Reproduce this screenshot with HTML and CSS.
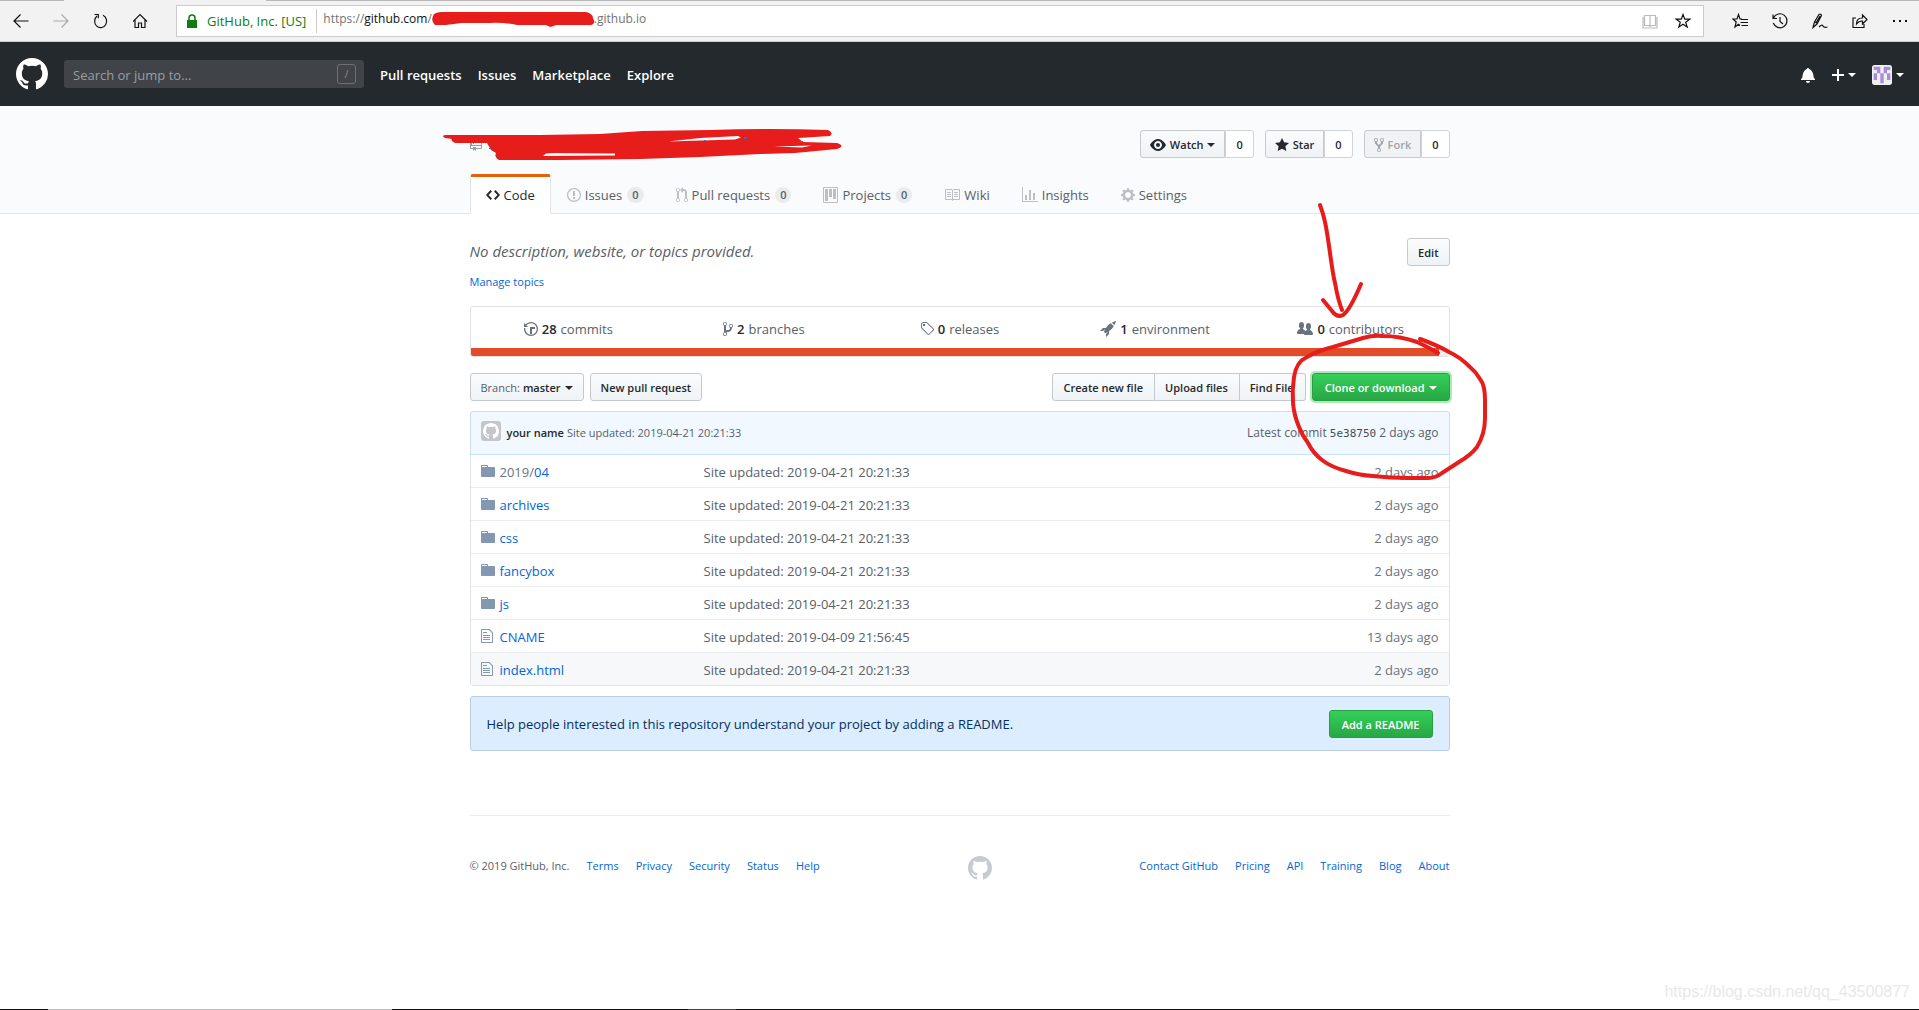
FILE: index.html
```html
<!DOCTYPE html>
<html lang="en">
<head>
<meta charset="utf-8">
<title>GitHub repository</title>
<link rel="stylesheet" href="styles.css">
</head>
<body>
<svg class="sprite" aria-hidden="true">
  <symbol id="mark" viewBox="0 0 16 16"><path fill-rule="evenodd" d="M8 0C3.58 0 0 3.58 0 8c0 3.54 2.29 6.53 5.47 7.59.4.07.55-.17.55-.38 0-.19-.01-.82-.01-1.49-2.01.37-2.53-.49-2.69-.94-.09-.23-.48-.94-.82-1.13-.28-.15-.68-.52-.01-.53.63-.01 1.08.58 1.23.82.72 1.21 1.87.87 2.33.66.07-.52.28-.87.51-1.07-1.78-.2-3.64-.89-3.64-3.95 0-.87.31-1.59.82-2.15-.08-.2-.36-1.02.08-2.12 0 0 .67-.21 2.2.82.64-.18 1.32-.27 2-.27.68 0 1.36.09 2 .27 1.53-1.04 2.2-.82 2.2-.82.44 1.1.16 1.92.08 2.12.51.56.82 1.27.82 2.15 0 3.07-1.87 3.75-3.65 3.95.29.25.54.73.54 1.48 0 1.07-.01 1.93-.01 2.2 0 .21.15.46.55.38A8.013 8.013 0 0 0 16 8c0-4.42-3.58-8-8-8z"/></symbol>
  <symbol id="folder" viewBox="0 0 14 16"><path fill-rule="evenodd" d="M13 4H7V3c0-.66-.31-1-1-1H1c-.55 0-1 .45-1 1v10c0 .55.45 1 1 1h12c.55 0 1-.45 1-1V5c0-.55-.45-1-1-1zM6 4H1V3h5v1z"/></symbol>
  <symbol id="file" viewBox="0 0 12 16"><path fill-rule="evenodd" d="M6 5H2V4h4v1zM2 8h7V7H2v1zm0 2h7V9H2v1zm0 2h7v-1H2v1zm10-7.5V14c0 .55-.45 1-1 1H1c-.55 0-1-.45-1-1V2c0-.55.45-1 1-1h7.5L12 4.5zM11 5L8 2H1v12h10V5z"/></symbol>
</svg>

<div class="tabstrip"><span></span></div>
<div class="browser">
  <div class="browser-nav">
    <button type="button" aria-label="Back"><svg width="16" height="16" viewBox="0 0 16 16"><path d="M15.500 8H1M7.500 1.500L1 8l6.500 6.500"/></svg></button>
    <button type="button" aria-label="Forward" disabled><svg width="16" height="16" viewBox="0 0 16 16"><path d="M.5 8H15M8.500 1.500L15 8l-6.500 6.500"/></svg></button>
    <button type="button" aria-label="Refresh"><svg width="16" height="16" viewBox="0 0 16 16"><path d="M10 2.200A6 6.500 0 1 1 4 3M1.500 1.500h3.800v3.800"/></svg></button>
    <button type="button" aria-label="Home"><svg width="16" height="16" viewBox="0 0 16 16"><path d="M0 8.500L7 1.500l7 7M2 7v7.500h3.500V10h3v4.500H12V7"/></svg></button>
  </div>
  <div class="address">
    <svg class="lock" width="10" height="14" viewBox="0 0 10 14"><path d="M0 6h10v8H0z"/><path d="M2 6V4a3 3 0 0 1 6 0v2" fill="none" stroke="#107c10" stroke-width="1.500"/></svg>
    <span class="owner">GitHub, Inc. [US]</span>
    <span class="url">https://<b>github.com</b>/<svg class="redact" width="162" height="14" viewBox="0 0 164 14"><path d="M2 2Q5 0 10 0H156Q163 2 163 6Q166 12 161 13H126L120 15 115 13H86Q70 10 58 11L30 11 14 13H3Q-2 9 2 2z"/></svg>.github.io</span>
    <button type="button" class="pale" aria-label="Reading view"><svg width="16" height="16" viewBox="0 0 16 16"><path d="M8 2.500H2.500v10H7l1 1 1-1h4.500v-10zM8 2.500v11M1 4v11h14V4"/></svg></button>
    <button type="button" aria-label="Add to favorites"><svg width="16" height="16" viewBox="0 0 16 16"><path d="M8 1.500l1.700 4.700h5l-4 3 1.500 4.900L8 11.200l-4.200 2.900 1.500-4.900-4-3h5z"/></svg></button>
  </div>
  <div class="browser-tools">
    <button type="button" aria-label="Favorites"><svg width="16" height="16" viewBox="0 0 16 16"><path d="M10 6L8 6 6.500 1.500 5 6H1l3.200 3L3 14l3.500-2.800L8 12.500M9 6.500h7M8.500 9.500H16M9.500 12.500H16"/></svg></button>
    <button type="button" aria-label="History"><svg width="16" height="16" viewBox="0 0 16 16"><path d="M1.500 5A7 7 0 1 1 1.300 10M1 1.500V5.500H5M8 4v4.500l3 2.500"/></svg></button>
    <button type="button" aria-label="Notes"><svg width="16" height="16" viewBox="0 0 16 16"><path d="M1 14.500L2.500 9 7 1.500q2-1 2.500 1L5 11zM3 9l2.500 1.500M7 14q3-3 4-1t4.500 1M8 3L4 10"/></svg></button>
    <button type="button" aria-label="Share"><svg width="16" height="16" viewBox="0 0 16 16"><path d="M4 5H1v9.500h11V11M4.500 11q0-6 6-6V2L15 6.500l-4.500 4.500V8q-4 0-6 3z"/></svg></button>
    <button type="button" aria-label="More"><svg width="16" height="16" viewBox="0 0 16 16"><path d="M1 8h2M7 8h2M13 8h2" stroke-width="2"/></svg></button>
  </div>
</div>

<header class="header">
  <a href="#" aria-label="Homepage" class="logo"><svg width="32" height="32"><use href="#mark"/></svg></a>
  <label class="search"><input type="text" placeholder="Search or jump to..." aria-label="Search or jump to"><kbd>/</kbd></label>
  <nav class="main-nav"><a href="#">Pull requests</a><a href="#">Issues</a><a href="#">Marketplace</a><a href="#">Explore</a></nav>
  <div class="user-nav">
    <a href="#" aria-label="Notifications"><svg width="15" height="16" viewBox="0 0 15 16"><path fill-rule="evenodd" d="M14 12v1H0v-1l.73-.58c.77-.77.81-2.55 1.19-4.42C2.690 3.230 6 2 6 2c0-.55.45-1 1-1s1 .45 1 1c0 0 3.390 1.230 4.160 5 .38 1.880.42 3.660 1.190 4.420l.66.58H14zm-7 4c1.110 0 2-.89 2-2H5c0 1.110.89 2 2 2z"/></svg></a>
    <button type="button" aria-label="Create new"><svg width="12" height="16" viewBox="0 0 12 16"><path d="M12 9H7v5H5V9H0V7h5V2h2v5h5v2z"/></svg><i class="caret"></i></button>
    <button type="button" aria-label="Account"><svg class="avatar" width="20" height="20" viewBox="0 0 60 60"><rect width="60" height="60" rx="8" fill="#f0f0f0"/><path fill="#a98bdc" d="M5 5h20v20H15V15H5zM35 5h20v10H45v10H35zM5 25h10v20H5zM45 25h10v20H45zM25 25h10v30H25z"/></svg><i class="caret"></i></button>
  </div>
</header>

<div class="pagehead">
  <div class="container">
    <div class="titlebar">
      <svg class="repo-icon" width="12" height="16" viewBox="0 0 12 16"><path fill-rule="evenodd" d="M4 9H3V8h1v1zm0-3H3v1h1V6zm0-2H3v1h1V4zm0-2H3v1h1V2zm8-1v12c0 .55-.45 1-1 1H6v2l-1.500-1.500L3 16v-2H1c-.55 0-1-.45-1-1V1c0-.55.45-1 1-1h10c.55 0 1 .45 1 1zm-1 10H1v2h2v-1h3v1h5v-2zm0-10H2v9h9V1z"/></svg>
      <div class="social">
        <div class="group"><button type="button" class="btn"><svg width="16" height="16" viewBox="0 0 16 16"><path fill-rule="evenodd" d="M8.060 2C3 2 0 8 0 8s3 6 8.060 6C13 14 16 8 16 8s-3-6-7.940-6zM8 12c-2.200 0-4-1.780-4-4 0-2.200 1.800-4 4-4 2.220 0 4 1.800 4 4 0 2.220-1.780 4-4 4zm2-4c0 1.110-.89 2-2 2-1.110 0-2-.89-2-2 0-1.110.89-2 2-2 1.110 0 2 .89 2 2z"/></svg>Watch<i class="caret"></i></button><a href="#" class="count">0</a></div>
        <div class="group"><button type="button" class="btn"><svg width="14" height="16" viewBox="0 0 14 16"><path d="M14 6l-4.900-.64L7 1 4.900 5.360 0 6l3.600 3.260L2.670 14 7 11.670 11.330 14l-.93-4.740L14 6z"/></svg>Star</button><a href="#" class="count">0</a></div>
        <div class="group"><button type="button" class="btn" disabled><svg width="10" height="16" viewBox="0 0 10 16"><path fill-rule="evenodd" d="M8 1a1.993 1.993 0 0 0-1 3.720V6L5 8 3 6V4.720A1.993 1.993 0 0 0 2 1a1.993 1.993 0 0 0-1 3.720V6.500l3 3v1.780A1.993 1.993 0 0 0 5 15a1.993 1.993 0 0 0 1-3.720V9.500l3-3V4.720A1.993 1.993 0 0 0 8 1zM2 4.200C1.340 4.200.8 3.650.8 3c0-.65.55-1.200 1.200-1.200.65 0 1.200.55 1.200 1.200 0 .65-.55 1.200-1.200 1.200zm3 10c-.66 0-1.200-.55-1.200-1.200 0-.65.55-1.200 1.200-1.200.65 0 1.200.55 1.200 1.200 0 .65-.55 1.200-1.200 1.200zm3-10c-.66 0-1.200-.55-1.200-1.200 0-.65.55-1.200 1.200-1.200.65 0 1.200.55 1.200 1.200 0 .65-.55 1.200-1.200 1.200z"/></svg>Fork</button><a href="#" class="count">0</a></div>
      </div>
    </div>
    <nav class="tabs">
      <a href="#" class="selected"><svg width="14" height="16" viewBox="0 0 14 16"><path d="M9.500 3L8 4.500 11.500 8 8 11.500 9.500 13 14 8 9.500 3zm-5 0L0 8l4.500 5L6 11.500 2.500 8 6 4.500 4.500 3z"/></svg>Code</a>
      <a href="#"><svg width="14" height="16" viewBox="0 0 14 16"><path fill-rule="evenodd" d="M7 2.300c3.140 0 5.700 2.560 5.700 5.700s-2.560 5.700-5.700 5.700A5.710 5.710 0 0 1 1.300 8c0-3.140 2.560-5.700 5.700-5.700zM7 1C3.140 1 0 4.140 0 8s3.140 7 7 7 7-3.140 7-7-3.140-7-7-7zm1 3H6v5h2V4zm0 6H6v2h2v-2z"/></svg>Issues<span class="counter">0</span></a>
      <a href="#"><svg width="12" height="16" viewBox="0 0 12 16"><path fill-rule="evenodd" d="M11 11.280V5c-.03-.78-.34-1.470-.94-2.060C9.460 2.350 8.780 2.030 8 2H7V0L4 3l3 3V4h1c.27.02.48.11.69.31.21.2.3.42.31.69v6.280A1.993 1.993 0 0 0 10 15a1.993 1.993 0 0 0 1-3.720zm-1 2.920c-.66 0-1.200-.55-1.200-1.200 0-.65.55-1.200 1.200-1.200.65 0 1.200.55 1.200 1.200 0 .65-.55 1.200-1.200 1.200zM4 3c0-1.110-.89-2-2-2a1.993 1.993 0 0 0-1 3.720v6.560A1.993 1.993 0 0 0 2 15a1.993 1.993 0 0 0 1-3.720V4.720c.59-.34 1-.98 1-1.720zm-.8 10c0 .66-.55 1.200-1.200 1.200-.65 0-1.200-.55-1.200-1.200 0-.65.55-1.200 1.200-1.200.65 0 1.200.55 1.200 1.200zM2 4.200C1.340 4.200.8 3.650.8 3c0-.65.55-1.200 1.200-1.200.65 0 1.200.55 1.200 1.200 0 .65-.55 1.200-1.200 1.200z"/></svg>Pull requests<span class="counter">0</span></a>
      <a href="#"><svg width="15" height="16" viewBox="0 0 15 16"><path fill-rule="evenodd" d="M10 12h3V2h-3v10zm-4-2h3V2H6v8zm-4 4h3V2H2v12zm-1 1h13V1H1v14zM14 0H1a1 1 0 0 0-1 1v14a1 1 0 0 0 1 1h13a1 1 0 0 0 1-1V1a1 1 0 0 0-1-1z"/></svg>Projects<span class="counter">0</span></a>
      <a href="#"><svg width="16" height="16" viewBox="0 0 16 16"><path fill-rule="evenodd" d="M3 5h4v1H3V5zm0 3h4V7H3v1zm0 2h4V9H3v1zm11-5h-4v1h4V5zm0 2h-4v1h4V7zm0 2h-4v1h4V9zm2-6v9c0 .55-.45 1-1 1H9.500l-1 1-1-1H2c-.55 0-1-.45-1-1V3c0-.55.45-1 1-1h5.500l1 1 1-1H15c.55 0 1 .45 1 1zm-8 .5L7.500 3H2v9h6V3.500zm7-.5H9.500l-.5.5V12h6V3z"/></svg>Wiki</a>
      <a href="#"><svg width="16" height="16" viewBox="0 0 16 16"><path d="M16 14v1H0V0h1v14h15zM5 13H3V8h2v5zm4 0H7V3h2v10zm4 0h-2V6h2v7z"/></svg>Insights</a>
      <a href="#"><svg width="14" height="16" viewBox="0 0 14 16"><path fill-rule="evenodd" d="M14 8.770v-1.600l-1.940-.64-.45-1.090.88-1.840-1.130-1.130-1.810.91-1.090-.45-.69-1.920h-1.600l-.63 1.940-1.110.45-1.840-.88-1.130 1.130.91 1.810-.45 1.090L0 7.230v1.590l1.940.64.45 1.090-.88 1.840 1.130 1.130 1.810-.91 1.090.45.69 1.920h1.590l.63-1.940 1.110-.45 1.840.88 1.130-1.130-.92-1.810.47-1.090L14 8.750v.02zM7 11c-1.660 0-3-1.340-3-3s1.340-3 3-3 3 1.340 3 3-1.340 3-3 3z"/></svg>Settings</a>
    </nav>
  </div>
</div>

<main class="container">
  <div class="about">
    <div><p class="desc">No description, website, or topics provided.</p><a href="#" class="topics">Manage topics</a></div>
    <button type="button" class="btn">Edit</button>
  </div>

  <div class="summary">
    <ul>
      <li><a href="#"><svg width="14" height="16" viewBox="0 0 14 16"><path d="M8 13H6V6h5v2H8v5zM7 1C4.810 1 2.870 2.020 1.590 3.590L0 2v4h4L2.500 4.500C3.550 3.170 5.170 2.300 7 2.300c3.140 0 5.700 2.560 5.700 5.700s-2.560 5.700-5.700 5.700A5.710 5.710 0 0 1 1.300 8c0-.34.03-.67.09-1H.08C.03 7.330 0 7.660 0 8c0 3.860 3.140 7 7 7s7-3.140 7-7-3.140-7-7-7z"/></svg><b>28</b> commits</a></li>
      <li><a href="#"><svg width="10" height="16" viewBox="0 0 10 16"><path fill-rule="evenodd" d="M10 5c0-1.110-.89-2-2-2a1.993 1.993 0 0 0-1 3.720v.3c-.02.52-.23.98-.63 1.380-.4.4-.86.61-1.380.63-.83.02-1.480.16-2 .45V4.720a1.993 1.993 0 0 0-1-3.720C.88 1 0 1.890 0 3a2 2 0 0 0 1 1.720v6.560c-.59.35-1 .99-1 1.720 0 1.110.89 2 2 2 1.110 0 2-.89 2-2 0-.53-.2-1-.53-1.360.09-.06.48-.41.59-.47.25-.11.56-.17.94-.17 1.050-.05 1.950-.45 2.750-1.250S8.950 7.770 9 6.730h-.02C9.590 6.370 10 5.730 10 5zM2 1.800c.66 0 1.200.55 1.200 1.200 0 .65-.55 1.200-1.200 1.200C1.350 4.200.8 3.650.8 3c0-.65.55-1.200 1.200-1.200zm0 12.410c-.66 0-1.200-.55-1.200-1.200 0-.65.55-1.200 1.200-1.200.65 0 1.200.55 1.200 1.200 0 .65-.55 1.200-1.200 1.200zm6-8c-.66 0-1.200-.55-1.200-1.200 0-.65.55-1.200 1.200-1.200.65 0 1.200.55 1.200 1.200 0 .65-.55 1.200-1.200 1.200z"/></svg><b>2</b> branches</a></li>
      <li><a href="#"><svg width="14" height="16" viewBox="0 0 14 16"><path fill-rule="evenodd" d="M7.730 1.730C7.260 1.260 6.620 1 5.960 1H3.500C2.130 1 1 2.130 1 3.500v2.470c0 .66.27 1.300.73 1.770l6.060 6.060c.39.39 1.020.39 1.410 0l4.590-4.590a.996.996 0 0 0 0-1.410L7.730 1.730zM2.380 7.090c-.31-.3-.47-.7-.47-1.130V3.500c0-.88.72-1.590 1.590-1.590h2.470c.42 0 .83.16 1.130.47l6.140 6.130-4.730 4.730-6.130-6.150zM3.010 3h2v2H3V3h.01z"/></svg><b>0</b> releases</a></li>
      <li><a href="#"><svg width="16" height="16" viewBox="0 0 16 16"><path d="M12.170 3.830c-.27-.27-.47-.55-.63-.88-.16-.31-.27-.66-.34-1.020-.58.33-1.160.7-1.730 1.130-.58.44-1.140.94-1.690 1.480-.7.7-1.330 1.810-1.780 2.450H3L0 10h3l2-2c-.34.77-1.020 2.980-1 3l1 1c.02.02 2.230-.64 3-1l-2 2v3l3-3v-3c.64-.45 1.750-1.090 2.450-1.780.55-.55 1.050-1.130 1.470-1.700.44-.58.81-1.160 1.140-1.720-.36-.08-.7-.19-1.030-.34a3.390 3.390 0 0 1-.86-.63zM16 0s-.09.38-.3 1.060c-.2.7-.55 1.580-1.060 2.660-.7-.08-1.270-.33-1.660-.72-.39-.39-.63-.94-.7-1.640C13.360.84 14.230.48 14.920.28 15.620.08 16 0 16 0z"/></svg><b>1</b> environment</a></li>
      <li><a href="#"><svg width="16" height="16" viewBox="0 0 16 16"><path d="M16 12.999c0 .439-.45 1-1 1H7.995c-.539 0-.994-.447-.995-.999H1c-.54 0-1-.561-1-1 0-2.634 3-4 3-4s.229-.409 0-1c-.841-.621-1.058-.59-1-3 .058-2.419 1.367-3 2.500-3s2.442.58 2.500 3c.058 2.410-.159 2.379-1 3-.229.59 0 1 0 1s1.549.711 2.420 2.088C9.196 9.369 10 8.999 10 8.999s.229-.409 0-1c-.841-.62-1.058-.59-1-3 .058-2.419 1.367-3 2.500-3s2.437.581 2.495 3c.059 2.410-.158 2.380-1 3-.229.59 0 1 0 1s3.005 1.366 3.005 4z"/></svg><b>0</b> contributors</a></li>
    </ul>
    <div class="langbar"><span style="width:99%"></span></div>
  </div>

  <div class="filenav">
    <button type="button" class="btn"><span class="light">Branch:</span> master<i class="caret"></i></button>
    <button type="button" class="btn">New pull request</button>
    <div class="group push"><button type="button" class="btn">Create new file</button><button type="button" class="btn">Upload files</button><button type="button" class="btn">Find File</button></div>
    <button type="button" class="btn green focused">Clone or download<i class="caret"></i></button>
  </div>

  <div class="files">
    <div class="commit">
      <span class="face"><svg width="16" height="16"><use href="#mark"/></svg></span>
      <a href="#" class="author">your name</a><a href="#" class="message">Site updated: 2019-04-21 20:21:33</a>
      <span class="latest">Latest commit <a href="#">5e38750</a> 2 days ago</span>
    </div>
    <table>
      <tr><td class="icon"><svg width="14" height="16"><use href="#folder"/></svg></td><td class="name"><a href="#"><span>2019/</span>04</a></td><td class="msg">Site updated: 2019-04-21 20:21:33</td><td class="age">2 days ago</td></tr>
      <tr><td class="icon"><svg width="14" height="16"><use href="#folder"/></svg></td><td class="name"><a href="#">archives</a></td><td class="msg">Site updated: 2019-04-21 20:21:33</td><td class="age">2 days ago</td></tr>
      <tr><td class="icon"><svg width="14" height="16"><use href="#folder"/></svg></td><td class="name"><a href="#">css</a></td><td class="msg">Site updated: 2019-04-21 20:21:33</td><td class="age">2 days ago</td></tr>
      <tr><td class="icon"><svg width="14" height="16"><use href="#folder"/></svg></td><td class="name"><a href="#">fancybox</a></td><td class="msg">Site updated: 2019-04-21 20:21:33</td><td class="age">2 days ago</td></tr>
      <tr><td class="icon"><svg width="14" height="16"><use href="#folder"/></svg></td><td class="name"><a href="#">js</a></td><td class="msg">Site updated: 2019-04-21 20:21:33</td><td class="age">2 days ago</td></tr>
      <tr><td class="icon"><svg width="12" height="16"><use href="#file"/></svg></td><td class="name"><a href="#">CNAME</a></td><td class="msg">Site updated: 2019-04-09 21:56:45</td><td class="age">13 days ago</td></tr>
      <tr class="hover"><td class="icon"><svg width="12" height="16"><use href="#file"/></svg></td><td class="name"><a href="#">index.html</a></td><td class="msg">Site updated: 2019-04-21 20:21:33</td><td class="age">2 days ago</td></tr>
    </table>
  </div>

  <div class="readme"><p>Help people interested in this repository understand your project by adding a README.</p><button type="button" class="btn green">Add a README</button></div>
</main>

<footer class="container footer">
  <nav><span>© 2019 GitHub, Inc.</span><a href="#">Terms</a><a href="#">Privacy</a><a href="#">Security</a><a href="#">Status</a><a href="#">Help</a></nav>
  <a href="#" class="footmark" aria-label="GitHub"><svg width="24" height="24"><use href="#mark"/></svg></a>
  <nav><a href="#">Contact GitHub</a><a href="#">Pricing</a><a href="#">API</a><a href="#">Training</a><a href="#">Blog</a><a href="#">About</a></nav>
</footer>
<div class="taskbar"></div>
<div class="watermark">https://blog.csdn.net/qq_43500877</div>

<svg class="ink" viewBox="470 0 980 500" aria-hidden="true">
  <path class="fill" d="M445 135L540 135 600 134 642 131 710 130Q770 128 828 130Q834 133 830 136L798 138 803 142 837 143Q846 146 837 149L795 153 760 154 700 157 640 159 560 160 499 160Q494 157 496 153L491 150 487 143 455 143Q450 140 452 139L445 138Q441 136 445 135z"/>
  <path class="gap" d="M668 141.500L700 138 738 136 741 137.500 735 139.500zM553 153L615 153.500 615 155.500 543 156 546 153.500zM774 146.500l38-1-10 2z"/>
  <path class="blue" d="M704 140h2v1h-2zM744 137h3v2h-3zM799 141h4v1h-4zM489 148h2v1h-2z"/>
  <path class="line" d="M1320 205Q1323 213 1325 222T1330 253T1335 283Q1338 300 1342 310M1323 300L1332 311Q1337 318 1343 315Q1350 310 1361 284"/>
  <path class="line" d="M1438 353Q1428 347 1417 342Q1400 336 1383 336Q1373 335 1363 338L1333 347Q1317 351 1307 357Q1296 362 1294 377Q1292 390 1293 403Q1294 415 1299 427Q1302 435 1308 443Q1313 453 1322 460Q1331 467 1346 471Q1358 475 1373 476Q1390 478 1408 478L1428 478Q1436 478 1442 473L1459 462Q1471 455 1477 447Q1485 434 1485 418V400Q1485 385 1480 379Q1476 372 1470 367Q1460 357 1449 352Q1437 345 1420 339"/>
</svg>
</body>
</html>
```
FILE: styles.css
```css
* { box-sizing: border-box; }
body {
  margin: 0;
  min-height: 100vh;
  position: relative;
  display: flex;
  flex-direction: column;
  overflow-x: hidden;
  background: #fff;
  color: #24292e;
  font: 13px/20px "Open Sans", "Noto Sans", sans-serif;
}
a { color: #0366d6; text-decoration: none; }
p, ul { margin: 0; padding: 0; }
svg { display: block; flex: none; fill: currentColor; }
button { font: inherit; color: inherit; background: none; border: 0; padding: 0; cursor: pointer; }
b { font-weight: 600; }
.sprite { position: absolute; width: 0; height: 0; }
.container { width: 100%; max-width: 980px; margin: 0 auto; }

/* Browser chrome */
.tabstrip { height: 1px; padding-left: 64px; background: #b8b8b8; }
.tabstrip span { display: block; width: 202px; height: 1px; background: #f2f2f2; }
.browser {
  height: 41px;
  display: flex;
  align-items: center;
  background: #f2f2f2;
  border-bottom: 1px solid #ccc;
  color: #111;
}
.browser-nav { display: flex; gap: 24px; padding: 0 27px 0 13px; }
.browser-tools { display: flex; gap: 24px; padding: 0 11px 0 28px; }
.browser button svg { fill: none; stroke: currentColor; stroke-width: 1.2; }
.browser button:disabled { color: #aaa; }
.address {
  flex: 1;
  height: 32px;
  display: flex;
  align-items: center;
  padding: 0 12px 0 10px;
  background: #fff;
  border: 1px solid #ccc;
}
.lock { color: #107c10; margin-right: 10px; }
.owner { color: #107c10; padding-right: 10px; margin-right: 6px; border-right: 1px solid #ccc; line-height: 24px; white-space: nowrap; }
.url { flex: 1; display: flex; color: #737373; font-size: 12px; height: 24px; line-height: 20px; white-space: nowrap; }
.url b { color: #111; font-weight: 400; }
.redact { color: #e71d1c; margin-top: 3px; overflow: visible; }
.pale { color: #bbb; margin-right: 17px; }

/* Site header */
.header {
  height: 64px;
  display: flex;
  align-items: center;
  padding: 0 15px 0 16px;
  background: #24292e;
  color: #fff;
}
.header a { color: #fff; }
.logo { margin-right: 16px; }
.search { display: flex; align-items: center; width: 300px; height: 28px; padding: 0 8px 0 9px; background: #404448; border-radius: 3px; }
.search input { flex: 1; min-width: 0; padding: 2px 0 0; border: 0; background: none; color: #fff; font: inherit; outline: 0; }
.search input::placeholder { color: #9a9da0; opacity: 1; }
.search kbd { width: 19px; height: 20px; border: 1px solid #6c7074; border-radius: 3px; color: #85888b; font: 11px/18px "Open Sans", sans-serif; text-align: center; }
.main-nav { display: flex; gap: 16px; margin-left: 16px; padding-top: 2px; font-weight: 600; }
.user-nav { display: flex; align-items: center; gap: 16px; margin-left: auto; padding-top: 2px; }
.user-nav button { display: flex; align-items: center; }
.caret { display: inline-block; width: 0; height: 0; margin-left: 4px; vertical-align: middle; border: 4px solid transparent; border-top-color: currentColor; border-bottom: 0; }

/* Repository head */
.pagehead { padding-top: 24px; background: #fafbfc; border-bottom: 1px solid #e1e4e8; }
.titlebar { display: flex; justify-content: space-between; margin-bottom: 16px; }
.repo-icon { color: #959da5; margin-top: 5px; }
.social { display: flex; gap: 11px; }
.group { display: flex; }
.btn {
  display: inline-flex;
  align-items: center;
  justify-content: center;
  height: 28px;
  padding: 2px 10px 0;
  border: 1px solid #c6cacd;
  border-radius: 3px;
  background: linear-gradient(#fafbfc, #eff3f6);
  font-size: 11px;
  font-weight: 600;
  line-height: 20px;
  white-space: nowrap;
}
.btn svg { margin-right: 4px; }
.btn:disabled { color: #a0a4a8; background: #eff3f6; }
.btn .light { color: #586069; font-weight: 400; margin-right: 3px; }
.group > :not(:last-child) { border-radius: 3px 0 0 3px; }
.group > * + * { border-left: 0; border-radius: 0 3px 3px 0; }
.group > * + :not(:last-child) { border-radius: 0; }
.push .btn { padding-right: 11px; }
.count { height: 28px; padding: 1px 10px 0; border: 1px solid #d1d4d7; background: #fff; color: #24292e; font-size: 11px; font-weight: 600; line-height: 26px; }
.social .btn { padding-right: 9px; padding-left: 9px; }
.green { padding-right: 12px; padding-left: 12px; color: #fff; border-color: #279f42; background: linear-gradient(#34d058, #28a745); }
.focused { box-shadow: 0 0 0 2px #aee9bc; }

.tabs { display: flex; margin-bottom: -1px; }
.tabs a { display: flex; align-items: center; height: 40px; padding: 0 15px; border: 1px solid transparent; border-top: 3px solid transparent; color: #586069; }
.tabs svg { margin-right: 4px; color: #bcc0c4; }
.tabs .selected { background: #fff; border-color: #e36209 #e1e4e8 transparent; border-radius: 3px 3px 0 0; color: #24292e; }
.tabs .selected svg { color: inherit; }
.counter { margin-left: 5px; padding: 0 5px; border-radius: 8px; background: #e9ebed; font-size: 11px; font-weight: 600; line-height: 16px; }

/* Description and summary */
.about { display: flex; justify-content: space-between; align-items: flex-start; padding: 24px 0 14px; }
.desc { font-size: 15px; line-height: 26px; font-style: italic; color: #586069; }
.topics { display: block; padding-top: 8px; font-size: 11px; }
.summary { border: 1px solid #dfe2e5; border-radius: 3px; overflow: hidden; }
.summary ul { display: flex; list-style: none; }
.summary li { flex: 1; }
.summary a { display: flex; justify-content: center; align-items: center; gap: 4px; height: 41px; padding-top: 2px; color: #586069; }
.summary svg { color: #6a737d; }
.summary b { color: #24292e; }
.langbar { height: 8px; background: #ededed; }
.langbar span { display: block; height: 8px; background: #e34c26; }
.filenav { display: flex; gap: 6px; margin: 16px 0 10px; }
.push { margin-left: auto; }

/* File list */
.files { border: 1px solid #dfe2e5; border-radius: 3px; }
.commit { display: flex; align-items: center; height: 44px; margin: -1px -1px 0; padding: 0 10px; background: #f1f8ff; border: 1px solid #c8e1ff; border-radius: 3px 3px 0 0; color: #586069; font-size: 11px; }
.face { margin: -4px 6px 0 0; padding: 2px; border-radius: 3px; background: #c4c6c8; color: #fff; }
.author { color: #24292e; font-weight: 600; margin-right: 3px; }
.message { color: #586069; }
.latest { margin-left: auto; font-size: 12px; }
.latest a { color: #444d56; font-family: "DejaVu Sans Mono", monospace; font-size: 11px; }
table { width: 100%; border-collapse: collapse; }
td { height: 33px; padding: 2px 0 0; border-top: 1px solid #eaecef; color: #586069; }
tr:first-child td { border-top: 0; height: 32px; }
td.icon { width: 29px; padding-top: 0; padding-left: 10px; color: #8297b0; }
td.name { width: 204px; }
.name span { color: #6a737d; }
td.age { padding-right: 10px; color: #6a737d; text-align: right; }
.hover { background: #f6f8fa; }
.readme { display: flex; justify-content: space-between; align-items: center; min-height: 55px; margin-top: 10px; padding: 0 16px; border: 1px solid #bccddf; border-radius: 3px; background: #dbedff; color: #032f62; }

/* Footer */
.footer { display: flex; justify-content: space-between; align-items: flex-start; margin-top: 64px; padding-top: 40px; border-top: 1px solid #eaecef; color: #586069; font-size: 11px; }
.footer nav { display: flex; gap: 17px; }
.footmark { color: #c6cbd1; }
.taskbar { height: 1px; margin-top: auto; background: linear-gradient(90deg, #111 48px, #bbb 48px 392px, #111 392px 688px, #444 688px 736px, #111 736px); }
.watermark { position: absolute; right: 9px; bottom: 8px; color: #e8e8e8; font: 16px/20px "Liberation Sans", Arial, sans-serif; }

/* Hand-drawn marks over the page */
.ink { position: absolute; top: 0; left: 50%; width: 980px; height: 500px; margin-left: -490px; overflow: visible; pointer-events: none; }
.ink .fill { fill: #e71d1c; }
.ink .gap { fill: #fafbfc; }
.ink .blue { fill: #3a6fc4; }
.ink .line { fill: none; stroke: #e71d1c; stroke-width: 4; stroke-linecap: round; stroke-linejoin: round; }
```
